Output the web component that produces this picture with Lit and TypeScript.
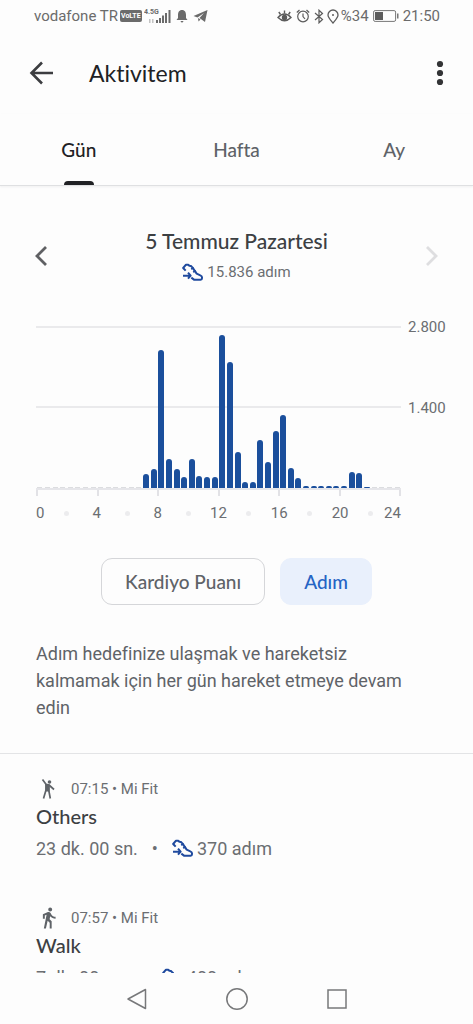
import { LitElement, html, css } from "lit";
import { customElement, property } from "lit/decorators.js";

const AXIS_MAX = 2800;

// Steps for each half hour of the day, 00:00 to 24:00.
const STEPS: number[] = [
  0, 0, 0, 0, 0, 0, 0, 0, 0, 0, 0, 0, 0, 0,
  240, 330, 2390, 500, 330, 195, 510, 215, 195, 195,
  2650, 2180, 620, 100, 100, 830, 450, 980, 1270, 350,
  170, 30, 30, 30, 30, 30, 30, 270, 260, 25, 0, 0, 0, 0,
];

const HOURS = [0, 2, 4, 6, 8, 10, 12, 14, 16, 18, 20, 22, 24];

const shoeIcon = html`<svg class="shoe" viewBox="0 0 63 54" aria-hidden="true">
  <g fill="none" stroke="#1f4a9e" stroke-width="6" stroke-linejoin="round">
    <path d="M11 23 L3.500 15 L12 5 H19 Q21 10 27 9 L31 13 L44 32 L55 37 Q60 39 60 43 V46 Q60 50 56 50 H36 L28 44" />
    <path d="M27 18 L36 15 M33 27 L42 24" stroke-width="4.500" />
    <path d="M3 38 H25 M18 29 L26 38 L18 47" />
  </g>
</svg>`;

const othersIcon = html`<svg class="figure" viewBox="0 0 16 22" aria-hidden="true">
  <circle cx="9.500" cy="4" r="1.800" fill="#5f6368" />
  <g fill="none" stroke="#5f6368" stroke-width="1.700" stroke-linejoin="round">
    <path d="M2.500 1.500 L6 6.300 L9 7 L14 11.500" />
    <path d="M6 6 V12 L3.500 20.500 M8.800 7 V12.500 L10.300 20.500" />
  </g>
  <path d="M5.500 5.800 L9.600 6.500 V13.500 H5.300 Z" fill="#5f6368" />
</svg>`;

const walkIcon = html`<svg class="figure" viewBox="3.500 1 15.500 22.500" aria-hidden="true">
  <path
    fill="#5f6368"
    d="M13.500 5.500c1.100 0 2-.9 2-2s-.9-2-2-2-2 .9-2 2 .9 2 2 2zM9.800 8.900L7 23h2.100l1.800-8 2.100 2v6h2v-7.500l-2.100-2 .6-3C14.800 12 16.800 13 19 13v-2c-1.900 0-3.500-1-4.300-2.400l-1-1.600c-.4-.6-1-1-1.700-1-.3 0-.5.100-.8.100L6 8.300V13h2V9.600l1.800-.7"
  />
</svg>`;

@customElement("status-bar")
class StatusBar extends LitElement {
  static styles = css`
    :host {
      display: flex;
      justify-content: space-between;
      align-items: center;
      height: 32px;
      padding: 0 33px 0 34px;
      font-size: 15px;
      color: #6b6b6b;
    }
    .side {
      display: flex;
      align-items: center;
      gap: 2px;
    }
    .volte {
      padding: 0 1px;
      border-radius: 2px;
      background: #6b6b6b;
      color: #fff;
      font-size: 7px;
      line-height: 12px;
      font-weight: 700;
    }
    .signal { width: 28px; height: 18px; }
    .bell { width: 12px; height: 14px; margin-left: 2px; }
    .plane { width: 15px; height: 14px; margin-left: 3px; }
    .eye { width: 15px; height: 14px; }
    .alarm { width: 14px; height: 14px; margin-left: 2px; }
    .bluetooth { width: 10px; height: 15px; margin-left: 2px; }
    .pin { width: 12px; height: 15px; margin-left: 1px; }
    .battery { width: 26px; height: 12px; margin: 0 2px; }
  `;

  render() {
    return html`
      <div class="side">
        <span>vodafone TR</span>
        <span class="volte">VoLTE</span>
        <svg class="signal" viewBox="0 0 28 18" fill="#6b6b6b">
          <text x="0" y="7" font-size="7" font-weight="700">4.5G</text>
          <rect x="5" y="12" width="1.500" height="4" opacity=".4" />
          <rect x="8" y="12" width="1.500" height="4" opacity=".4" />
          <rect x="12" y="13" width="2" height="3" />
          <rect x="15" y="11" width="2" height="5" />
          <rect x="18" y="8.500" width="2" height="7.500" />
          <rect x="21" y="6" width="2" height="10" />
          <rect x="24.500" y="3" width="2" height="13" />
        </svg>
        <svg class="bell" viewBox="0 0 12 14" fill="#6b6b6b">
          <path d="M6 1 C9 1 10 3.500 10 6 V9 L11.500 11 H.5 L2 9 V6 C2 3.500 3 1 6 1 Z M4.500 12 H7.500 Q7 13.500 6 13.500 Q5 13.500 4.500 12 Z" />
        </svg>
        <svg class="plane" viewBox="0 0 15 14" fill="#6b6b6b">
          <path d="M14.500 1 L.5 7 L4.500 8.500 L11 4 L6.500 9 L12 13 Z M5 9 L5.500 12.500 L7.500 10.500 Z" />
        </svg>
      </div>
      <div class="side">
        <svg class="eye" viewBox="0 0 15 14" fill="none" stroke="#5c5c5c" stroke-width="1.400">
          <path d="M1 8.500 Q7.500 1.500 14 8.500 Q7.500 15 1 8.500 Z" />
          <circle cx="7.500" cy="8.500" r="2" fill="#5c5c5c" />
          <path d="M7.500 4.500 V1.500 M3.500 5.500 L1.800 3 M11.500 5.500 L13.200 3" />
        </svg>
        <svg class="alarm" viewBox="0 0 14 14" fill="none" stroke="#5c5c5c" stroke-width="1.200">
          <circle cx="7" cy="7.500" r="5.300" />
          <path d="M7 4.500 V7.500 L9 10 M.8 3.500 L3.500 1 M13.200 3.500 L10.500 1" />
        </svg>
        <svg class="bluetooth" viewBox="0 0 10 15" fill="none" stroke="#5c5c5c" stroke-width="1.200">
          <path d="M1 4 L8.500 10.500 L5 13.800 V1.200 L8.500 4.500 L1 11" />
        </svg>
        <svg class="pin" viewBox="0 0 12 15" fill="none" stroke="#5c5c5c" stroke-width="1.300">
          <path d="M6 14 C3 10.500 1 8.500 1 6 A5 5 0 0 1 11 6 C11 8.500 9 10.500 6 14 Z" />
          <circle cx="6" cy="6" r="1" fill="#5c5c5c" stroke="none" />
        </svg>
        <span>%34</span>
        <svg class="battery" viewBox="0 0 26 12">
          <rect x=".6" y=".6" width="22" height="10.800" rx="1.500" fill="none" stroke="#777" />
          <rect x="2" y="2" width="8" height="8" fill="#5c5c5c" />
          <rect x="24" y="3.500" width="1.500" height="5" fill="#777" />
        </svg>
        <span>21:50</span>
      </div>
    `;
  }
}

@customElement("step-chart")
class StepChart extends LitElement {
  static styles = css`
    :host {
      display: grid;
      grid-template-columns: 1fr 44px;
      column-gap: 7px;
      padding: 0 21px 0 36px;
      font-size: 15px;
      line-height: 18px;
      color: #6b6e72;
    }
    .plot {
      display: grid;
      grid-template-columns: repeat(48, 1fr);
      justify-items: center;
      align-items: end;
      height: 162px;
      border-bottom: 2px solid #e6e6ea;
      background:
        linear-gradient(#eaeaec, #eaeaec) 0 0 / 100% 2px no-repeat,
        linear-gradient(#eaeaec, #eaeaec) 0 50% / 100% 2px no-repeat;
    }
    .bar {
      width: 6px;
      border-radius: 3px 3px 0 0;
      background: #1b4f9c;
    }
    .empty {
      width: 5px;
      height: 1px;
      background: #dcdde0;
    }
    .scale {
      display: flex;
      flex-direction: column;
      justify-content: space-between;
      height: 99px;
      margin-top: -8px;
    }
    .ticks {
      display: flex;
      justify-content: space-between;
      height: 6px;
      grid-column: 1;
    }
    .tick {
      width: 2px;
      background: #e2e2e6;
    }
    .hours {
      display: flex;
      justify-content: space-between;
      align-items: center;
      grid-column: 1;
      margin-top: 8px;
    }
    .hour {
      display: flex;
      justify-content: center;
      width: 0;
    }
    .hour:first-child { justify-content: flex-start; }
    .hour:last-child { justify-content: flex-end; }
    .dot {
      flex: none;
      width: 5px;
      height: 5px;
      border-radius: 50%;
      background: #ececee;
    }
  `;

  @property({ attribute: false }) steps: number[] = [];

  render() {
    return html`
      <div class="plot">
        ${this.steps.map((n) =>
          n > 0
            ? html`<div class="bar" style="height:${(n / AXIS_MAX) * 100}%"></div>`
            : html`<div class="empty"></div>`
        )}
      </div>
      <div class="scale"><span>2.800</span><span>1.400</span></div>
      <div class="ticks">
        ${[0, 4, 8, 12, 16, 20, 24].map(() => html`<span class="tick"></span>`)}
      </div>
      <div class="hours">
        ${HOURS.map(
          (h) => html`<span class="hour">${h % 4 === 0 ? h : html`<i class="dot"></i>`}</span>`
        )}
      </div>
    `;
  }
}

@customElement("activity-entry")
class ActivityEntry extends LitElement {
  static styles = css`
    :host {
      display: block;
      padding: 0 36px;
      color: #6b6e72;
    }
    .meta {
      display: flex;
      align-items: center;
      height: 22px;
      font-size: 15px;
    }
    .icon {
      display: flex;
      width: 35px;
      padding-left: 4px;
      box-sizing: border-box;
    }
    .figure { width: 16px; height: 22px; }
    .name {
      margin: 2px 0 4px;
      font: 500 20px/28px Lato, sans-serif;
      color: #3c4043;
    }
    .detail {
      display: flex;
      align-items: center;
      height: 28px;
      font-size: 18px;
    }
    .sep { margin: 0 14px; }
    .shoe { width: 21px; height: 18px; margin-right: 4px; }
  `;

  @property() time = "";
  @property() name = "";
  @property() duration = "";
  @property() steps = "";
  @property({ attribute: false }) icon: unknown;

  render() {
    return html`
      <div class="meta"><span class="icon">${this.icon}</span>${this.time} • Mi Fit</div>
      <h2 class="name">${this.name}</h2>
      <div class="detail">
        ${this.duration}<span class="sep">•</span>${shoeIcon}${this.steps} adım
      </div>
    `;
  }
}

@customElement("app-root")
class AppRoot extends LitElement {
  static styles = css`
    :host {
      display: flex;
      flex-direction: column;
      height: 100vh;
      overflow: hidden;
      background: #fdfdfd;
      font-family: Roboto, sans-serif;
      font-variant-ligatures: none;
      color: #5f6368;
    }
    button {
      border: 0;
      padding: 0;
      background: none;
      color: inherit;
      font: inherit;
      font-variant-ligatures: none;
    }
    button svg { display: block; }
    .appbar {
      display: flex;
      align-items: center;
      flex: none;
      height: 82px;
      padding: 0 28px 0 29px;
    }
    .title {
      flex: 1;
      margin: 0 0 0 35px;
      font: 400 23px/28px Lato, sans-serif;
      font-variant-ligatures: none;
      color: #202124;
    }
    .tabs {
      display: grid;
      grid-template-columns: repeat(3, 1fr);
      flex: none;
      height: 71px;
      border-bottom: 1px solid #dfe0e2;
      box-shadow: 0 1px 2px #f0f0f1;
    }
    .tab {
      display: grid;
      grid-template-rows: 1fr 4px;
      justify-items: center;
      font: 500 19px/24px Lato, sans-serif;
      font-variant-ligatures: none;
    }
    .label { padding-top: 24px; }
    .active { color: #202124; }
    .active::after {
      content: "";
      width: 30px;
      border-radius: 4px 4px 0 0;
      background: #202124;
    }
    .content {
      flex: 1;
      min-height: 0;
      overflow: hidden;
    }
    .day {
      display: flex;
      align-items: center;
      justify-content: space-between;
      height: 52px;
      padding: 42px 34px 0;
    }
    .date {
      margin: 0;
      font: 500 21px/28px Lato, sans-serif;
      color: #3c4043;
      text-align: center;
    }
    .total {
      display: flex;
      align-items: center;
      justify-content: center;
      gap: 4px;
      margin-top: 7px;
      font-size: 15px;
      line-height: 20px;
      color: #6b6e72;
    }
    .shoe { width: 21px; height: 18px; }
    .prev, .next { margin-top: 4px; }
    .chart { margin-top: 46px; }
    .chips {
      display: flex;
      justify-content: center;
      gap: 15px;
      margin-top: 36px;
    }
    .chip {
      height: 47px;
      padding: 0 23px;
      border: 1px solid #d5d6d9;
      border-radius: 11px;
      font: 500 19px/24px Lato, sans-serif;
    }
    .selected {
      border-color: #e9f0fc;
      background: #e9f0fc;
      color: #2564c4;
    }
    .hint {
      margin: 35px 0 0;
      padding: 0 56px 32px 36px;
      border-bottom: 1px solid #e3e4e6;
      font-size: 18px;
      line-height: 27px;
    }
    .entries {
      display: grid;
      gap: 45px;
      padding-top: 24px;
    }
    .navbar {
      display: flex;
      align-items: center;
      justify-content: center;
      gap: 76px;
      flex: none;
      height: 51px;
    }
    .navbar svg { width: 24px; height: 24px; }
  `;

  render() {
    return html`
      <status-bar></status-bar>
      <header class="appbar">
        <button aria-label="Geri">
          <svg width="25" height="24" viewBox="0 0 25 24" fill="none" stroke="#3c3d40" stroke-width="2.600">
            <path d="M24 12 H3 M13 1.500 L2.500 12 L13 22.500" />
          </svg>
        </button>
        <h1 class="title">Aktivitem</h1>
        <button aria-label="Menü">
          <svg width="10" height="26" viewBox="0 0 10 26" fill="#333436">
            <circle cx="5" cy="4" r="3.100" />
            <circle cx="5" cy="13" r="3.100" />
            <circle cx="5" cy="22" r="3.100" />
          </svg>
        </button>
      </header>
      <nav class="tabs">
        <button class="tab active"><span class="label">Gün</span></button>
        <button class="tab"><span class="label">Hafta</span></button>
        <button class="tab"><span class="label">Ay</span></button>
      </nav>
      <main class="content">
        <section class="day">
          <button class="prev" aria-label="Önceki gün">
            <svg width="14" height="20" viewBox="0 0 14 20" fill="none" stroke="#5f6063" stroke-width="2.800">
              <path d="M12 1 L3 10 L12 19" />
            </svg>
          </button>
          <div>
            <h2 class="date">5 Temmuz Pazartesi</h2>
            <div class="total">${shoeIcon}<span>15.836 adım</span></div>
          </div>
          <button class="next" aria-label="Sonraki gün">
            <svg width="14" height="20" viewBox="0 0 14 20" fill="none" stroke="#dedee0" stroke-width="2.800">
              <path d="M2 1 L11 10 L2 19" />
            </svg>
          </button>
        </section>
        <step-chart class="chart" .steps=${STEPS}></step-chart>
        <div class="chips">
          <button class="chip">Kardiyo Puanı</button>
          <button class="chip selected">Adım</button>
        </div>
        <p class="hint">
          Adım hedefinize ulaşmak ve hareketsiz kalmamak için her gün hareket etmeye devam edin
        </p>
        <div class="entries">
          <activity-entry
            time="07:15" name="Others" duration="23 dk. 00 sn." steps="370" .icon=${othersIcon}
          ></activity-entry>
          <activity-entry
            time="07:57" name="Walk" duration="7 dk. 00 sn." steps="400" .icon=${walkIcon}
          ></activity-entry>
        </div>
      </main>
      <footer class="navbar">
        <button aria-label="Geri dön">
          <svg viewBox="0 0 24 24" fill="none" stroke="#77787a" stroke-width="1.500" stroke-linejoin="round">
            <path d="M3 12 L20.500 2.500 V21.500 Z" />
          </svg>
        </button>
        <button aria-label="Ana ekran">
          <svg viewBox="0 0 24 24" fill="none" stroke="#77787a" stroke-width="1.500">
            <circle cx="12" cy="12" r="10.200" />
          </svg>
        </button>
        <button aria-label="Son uygulamalar">
          <svg viewBox="0 0 24 24" fill="none" stroke="#77787a" stroke-width="1.500">
            <rect x="3" y="3" width="18" height="18" />
          </svg>
        </button>
      </footer>
    `;
  }
}
